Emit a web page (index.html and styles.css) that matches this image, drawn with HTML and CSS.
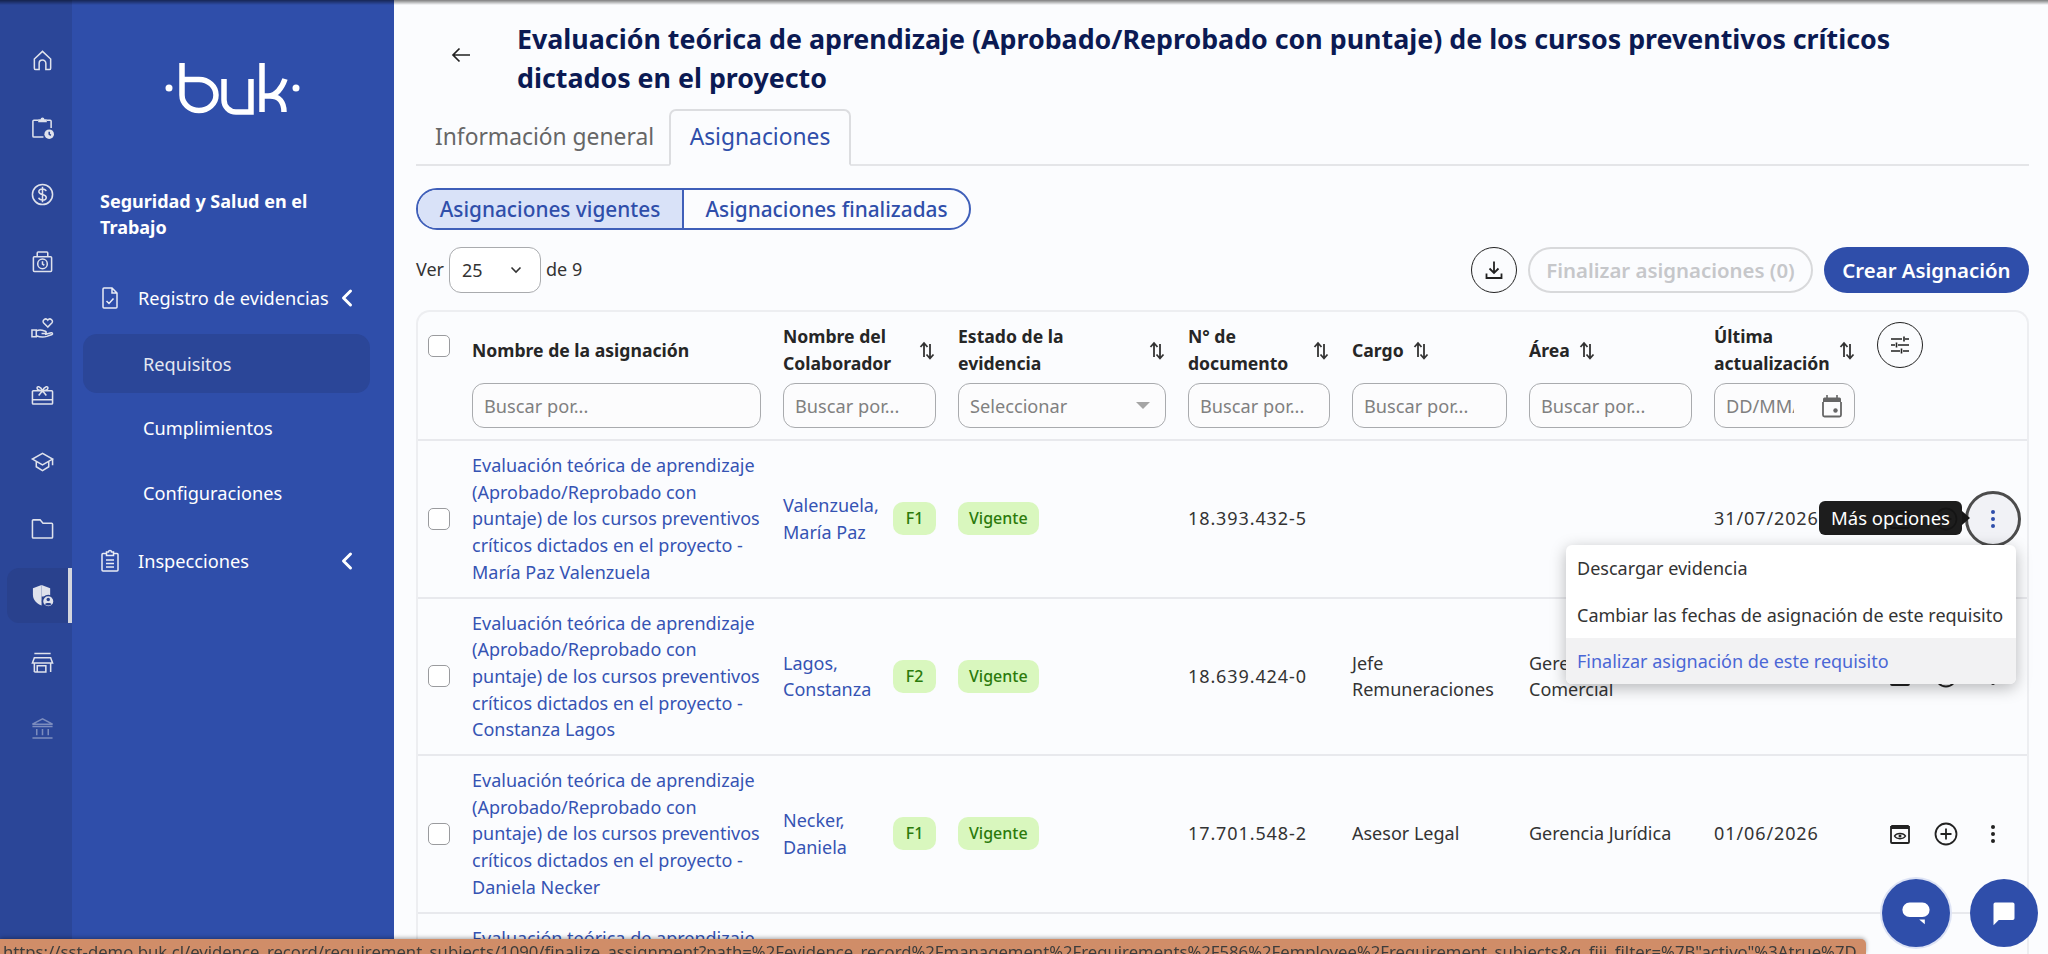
FILE: index.html
```html
<!DOCTYPE html>
<html lang="es">
<head>
    <meta charset="UTF-8">
    <title>Asignaciones - Seguridad y Salud en el Trabajo</title>
    <link rel="stylesheet" href="styles.css">
</head>
<body>
    <svg class="sprites" aria-hidden="true">
        <symbol id="i-sort" viewBox="0 0 18 22"><path d="M6 18V5M2.500 8 6 4l3.500 4M12 5v14M8.500 15.500 12 19.500l3.500-4" fill="none" stroke="currentColor" stroke-width="1.800"/></symbol>
        <symbol id="i-eye" viewBox="0 0 24 24"><path d="M3 7V4a1 1 0 0 1 1-1h16a1 1 0 0 1 1 1v3z" fill="currentColor"/><path d="M3 4v16a1 1 0 0 0 1 1h16a1 1 0 0 0 1-1V4" fill="none" stroke="currentColor" stroke-width="1.800"/><path d="M6.500 14c2-3.500 9-3.500 11 0-2 3.500-9 3.500-11 0z" fill="none" stroke="currentColor" stroke-width="1.500"/><circle cx="12" cy="14" r="1.500" fill="currentColor"/></symbol>
        <symbol id="i-plus" viewBox="0 0 24 24"><circle cx="12" cy="12" r="10.500" fill="none" stroke="currentColor" stroke-width="1.800"/><path d="M12 6.500v11M6.500 12h11" fill="none" stroke="currentColor" stroke-width="1.800"/></symbol>
        <symbol id="i-dots" viewBox="0 0 24 24"><circle cx="12" cy="5" r="2" fill="currentColor"/><circle cx="12" cy="12" r="2" fill="currentColor"/><circle cx="12" cy="19" r="2" fill="currentColor"/></symbol>
        <symbol id="i-chevron" viewBox="0 0 20 20"><path d="M13.500 3 6.500 10l7 7" fill="none" stroke="currentColor" stroke-width="3" stroke-linecap="round" stroke-linejoin="round"/></symbol>
    </svg>

    <div class="app">
        <!-- rail de modulos -->
        <nav class="rail">
            <a class="rail-item"><svg class="rail-icon" viewBox="0 0 24 24"><path d="M3.500 10.500 12 2.500l8.500 8V20a1.500 1.500 0 0 1-1.500 1.500h-3.500V15a3.500 3.500 0 0 0-7 0v6.500H5A1.500 1.500 0 0 1 3.500 20z"/></svg></a>
            <a class="rail-item"><svg class="rail-icon" viewBox="0 0 24 24"><path d="M16.500 4.500H20a1 1 0 0 1 1 1v7M7.500 4.500H3a1 1 0 0 0-1 1V21a1 1 0 0 0 1 1h10"/><path class="solid" d="M7.500 3.500H10a2 2 0 0 1 4 0h2.500v3h-9z"/><circle class="solid" cx="19" cy="19" r="5"/><path class="cut" d="M19 16.500V19l1.700 1.200"/></svg></a>
            <a class="rail-item"><svg class="rail-icon" viewBox="0 0 24 24"><circle cx="12" cy="12" r="10.500"/><path d="M15.800 8.500c-.5-1.600-2-2.300-3.800-2.300-2.100 0-3.800 1.100-3.800 2.900 0 3.800 7.700 2 7.700 5.900 0 1.800-1.800 2.800-3.900 2.800-1.900 0-3.400-.8-4-2.400M12 3.800v16.400"/></svg></a>
            <a class="rail-item"><svg class="rail-icon" viewBox="0 0 24 24"><rect x="2.500" y="7" width="19" height="15.500" rx="1"/><path d="M6.500 7V3a1 1 0 0 1 1-1h9a1 1 0 0 1 1 1v4"/><circle cx="12" cy="14.500" r="5"/><path d="M12 11.800v2.900l1.900 1.200"/></svg></a>
            <a class="rail-item"><svg class="rail-icon" viewBox="0 0 24 24"><path d="M17.500 10.500 13.300 6.300c-2.400-2.800 2-6 4.200-3 2.200-3 6.600.2 4.200 3z"/><path d="M1 13.500h4.500v7H1zM5.500 14.500c2-1 4.200-1.300 6.200-.7l3.300 1c1.300.5 1 2.400-.5 2.400h-3.500M5.500 19.500c4 1.700 8 1.700 11 .7l5.500-2c1-.6.200-2-1-1.700l-6.500 1.700"/></svg></a>
            <a class="rail-item"><svg class="rail-icon" viewBox="0 0 24 24"><path d="M1.500 9a1 1 0 0 1 1-1h19a1 1 0 0 1 1 1v12a1 1 0 0 1-1 1h-19a1 1 0 0 1-1-1zM1.500 17.500h21M12 8C10 3.500 5.500 2.500 6.500 6 7 7.800 10 8 12 8c2 0 5-.2 5.500-2C18.500 2.500 14 3.500 12 8zM12 8l-4 5M12 8l4 5"/></svg></a>
            <a class="rail-item"><svg class="rail-icon" viewBox="0 0 24 24"><path d="M12 3.500 1.500 9.500 12 15.500l10.500-6zM5.500 12v5.500l6.500 4 6.500-4V12M22.500 9.500V16"/></svg></a>
            <a class="rail-item"><svg class="rail-icon" viewBox="0 0 24 24"><path d="M1.500 4a1 1 0 0 1 1-1h7l3 3.500h9a1 1 0 0 1 1 1V21a1 1 0 0 1-1 1h-19a1 1 0 0 1-1-1z"/></svg></a>
            <a class="rail-item active"><svg class="rail-icon" viewBox="0 0 24 24"><path class="solid" d="M11 1 2 4.500v6.500c0 5.500 3.600 9.500 9 11.500z"/><path class="solid" d="M11 1l9 3.500V13h-9z"/><circle class="solid ring" cx="18" cy="18" r="6"/><circle class="cut-fill" cx="18" cy="16.200" r="1.800"/><path class="cut-fill" d="M14.500 21c.7-1.700 6.300-1.700 7 0a5 5 0 0 1-7 0z"/></svg></a>
            <a class="rail-item"><svg class="rail-icon" viewBox="0 0 24 24"><path d="M3.500 2.500h17M3.500 7h17l2 5.500h-21zM3.500 12.500V22M20.500 12.500V22M3.500 22h12M6.500 15.500h9V22h-9z"/></svg></a>
            <a class="rail-item dim"><svg class="rail-icon" viewBox="0 0 24 24"><path d="M12 2 1.500 7.500h21zM1.500 10h21M1.500 22h21M6 12.500V19M12 12.500V19M18 12.500V19"/></svg></a>
        </nav>

        <!-- menu del modulo -->
        <aside class="side">
            <svg class="logo" viewBox="0 0 136 52" role="img" aria-label="buk">
                <circle cx="4" cy="26" r="3.500" class="logo-dot"/>
                <path d="M17 1v32a17 15.500 0 1 0 17-15.500H17M59 17v21a12 12 0 0 0 12 12h15V17M97 1v49M97 34h6c8 0 14-8 17-17M105 34c9 0 14 6 14 16" class="logo-line"/>
                <circle cx="131" cy="26" r="3.500" class="logo-dot"/>
            </svg>
            <h2 class="side-title">Seguridad y Salud en el Trabajo</h2>
            <ul class="side-menu">
                <li class="side-group">
                    <svg class="side-icon" viewBox="0 0 24 24"><path d="M6 2h8l5 5v14a1 1 0 0 1-1 1H6a1 1 0 0 1-1-1V3a1 1 0 0 1 1-1zM14 2v5h5M8.500 15l2.500 2.500 4.500-5"/></svg>
                    <span>Registro de evidencias</span>
                    <svg class="side-chevron"><use href="#i-chevron"/></svg>
                </li>
                <li class="side-sub current">Requisitos</li>
                <li class="side-sub">Cumplimientos</li>
                <li class="side-sub">Configuraciones</li>
                <li class="side-group last">
                    <svg class="side-icon" viewBox="0 0 24 24"><path d="M8 4.500H5a1 1 0 0 0-1 1V21a1 1 0 0 0 1 1h14a1 1 0 0 0 1-1V5.500a1 1 0 0 0-1-1h-3M8.500 3H10.500a1.500 1.500 0 0 1 3 0h2v3.500h-7zM8 11h8M8 14.500h8M8 18h8"/></svg>
                    <span>Inspecciones</span>
                    <svg class="side-chevron"><use href="#i-chevron"/></svg>
                </li>
            </ul>
        </aside>

        <main class="main">
            <header class="page-head">
                <svg class="back" viewBox="0 0 24 24"><path d="M21 12H4M10.500 5.500 4 12l6.500 6.500" fill="none" stroke="currentColor" stroke-width="1.700"/></svg>
                <h1>Evaluación teórica de aprendizaje (Aprobado/Reprobado con puntaje) de los cursos preventivos críticos dictados en el proyecto</h1>
            </header>

            <div class="tabs">
                <a class="tab">Información general</a>
                <a class="tab active">Asignaciones</a>
            </div>

            <div class="segment">
                <a class="segment-item active">Asignaciones vigentes</a>
                <a class="segment-item">Asignaciones finalizadas</a>
            </div>

            <div class="toolbar">
                <div class="pager">
                    <span>Ver</span>
                    <div class="page-size">
                        <b>25</b>
                        <svg viewBox="0 0 12 8"><path d="M1.500 1.500 6 6l4.500-4.500" fill="none" stroke="currentColor" stroke-width="1.600"/></svg>
                    </div>
                    <span>de 9</span>
                </div>
                <div class="actions">
                    <button class="btn-round"><svg viewBox="0 0 24 24"><path d="M12 3.500v11.500M7.500 10.500 12 15l4.500-4.500M4.500 15.500V20h15v-4.500" fill="none" stroke="currentColor" stroke-width="1.800"/></svg></button>
                    <button class="btn btn-disabled">Finalizar asignaciones (0)</button>
                    <button class="btn btn-primary">Crear Asignación</button>
                </div>
            </div>

            <div class="table-wrap">
                <table class="data-table">
                    <colgroup>
                        <col class="c-check"><col class="c-name"><col class="c-person"><col class="c-state">
                        <col class="c-doc"><col class="c-job"><col class="c-area"><col class="c-date"><col class="c-acts">
                    </colgroup>
                    <thead>
                        <tr>
                            <th class="cell-check"><span class="checkbox"></span></th>
                            <th>
                                <div class="th-label">Nombre de la asignación</div>
                                <input class="filter" placeholder="Buscar por...">
                            </th>
                            <th>
                                <div class="th-label spread"><span>Nombre del<br>Colaborador</span><svg class="sort"><use href="#i-sort"/></svg></div>
                                <input class="filter" placeholder="Buscar por...">
                            </th>
                            <th>
                                <div class="th-label spread"><span>Estado de la<br>evidencia</span><svg class="sort"><use href="#i-sort"/></svg></div>
                                <div class="filter filter-select"><span>Seleccionar</span><i class="caret"></i></div>
                            </th>
                            <th>
                                <div class="th-label spread"><span>N° de<br>documento</span><svg class="sort"><use href="#i-sort"/></svg></div>
                                <input class="filter" placeholder="Buscar por...">
                            </th>
                            <th>
                                <div class="th-label">Cargo<svg class="sort"><use href="#i-sort"/></svg></div>
                                <input class="filter" placeholder="Buscar por...">
                            </th>
                            <th>
                                <div class="th-label">Área<svg class="sort"><use href="#i-sort"/></svg></div>
                                <input class="filter" placeholder="Buscar por...">
                            </th>
                            <th>
                                <div class="th-label spread"><span>Última<br>actualización</span><svg class="sort"><use href="#i-sort"/></svg></div>
                                <div class="filter filter-date">
                                    <input placeholder="DD/MM/AAAA">
                                    <svg viewBox="0 0 24 24"><path d="M7 1v3M17 1v3" stroke="currentColor" stroke-width="1.600"/><path d="M3 8V5a1.500 1.500 0 0 1 1.500-1.500h15A1.500 1.500 0 0 1 21 5v3z" fill="currentColor"/><path d="M3 8v13a1.500 1.500 0 0 0 1.500 1.500h15A1.500 1.500 0 0 0 21 21V8" fill="none" stroke="currentColor" stroke-width="1.800"/><circle cx="15.500" cy="16.500" r="2.200" fill="currentColor"/></svg>
                                </div>
                            </th>
                            <th class="cell-settings">
                                <button class="btn-round"><svg viewBox="0 0 24 24"><path d="M3 6h11M17 6h4M16 3.500v5M3 12h4M10 12h11M8.500 9.500v5M3 18h9M15 18h6M13.500 15.500v5" fill="none" stroke="currentColor" stroke-width="1.600"/></svg></button>
                            </th>
                        </tr>
                    </thead>
                    <tbody>
                        <tr>
                            <td class="cell-check"><span class="checkbox"></span></td>
                            <td><a class="link">Evaluación teórica de aprendizaje (Aprobado/Reprobado con puntaje) de los cursos preventivos críticos dictados en el proyecto - María Paz Valenzuela</a></td>
                            <td><div class="person"><a class="link">Valenzuela, María Paz</a><span class="badge">F1</span></div></td>
                            <td><span class="badge">Vigente</span></td>
                            <td class="num">18.393.432-5</td>
                            <td></td>
                            <td></td>
                            <td class="num">31/07/2026</td>
                            <td>
                                <div class="row-actions">
                                    <a class="row-btn"><svg><use href="#i-eye"/></svg></a>
                                    <a class="row-btn"><svg><use href="#i-plus"/></svg></a>
                                    <a class="row-btn more open">
                                        <svg><use href="#i-dots"/></svg>
                                        <span class="tooltip">Más opciones</span>
                                    </a>
                                    <ul class="menu">
                                        <li>Descargar evidencia</li>
                                        <li>Cambiar las fechas de asignación de este requisito</li>
                                        <li class="hover">Finalizar asignación de este requisito</li>
                                    </ul>
                                </div>
                            </td>
                        </tr>
                        <tr>
                            <td class="cell-check"><span class="checkbox"></span></td>
                            <td><a class="link">Evaluación teórica de aprendizaje (Aprobado/Reprobado con puntaje) de los cursos preventivos críticos dictados en el proyecto - Constanza Lagos</a></td>
                            <td><div class="person"><a class="link">Lagos, Constanza</a><span class="badge">F2</span></div></td>
                            <td><span class="badge">Vigente</span></td>
                            <td class="num">18.639.424-0</td>
                            <td>Jefe Remuneraciones</td>
                            <td>Gerencia<br>Comercial</td>
                            <td></td>
                            <td>
                                <div class="row-actions">
                                    <a class="row-btn"><svg><use href="#i-eye"/></svg></a>
                                    <a class="row-btn"><svg><use href="#i-plus"/></svg></a>
                                    <a class="row-btn"><svg><use href="#i-dots"/></svg></a>
                                </div>
                            </td>
                        </tr>
                        <tr>
                            <td class="cell-check"><span class="checkbox"></span></td>
                            <td><a class="link">Evaluación teórica de aprendizaje (Aprobado/Reprobado con puntaje) de los cursos preventivos críticos dictados en el proyecto - Daniela Necker</a></td>
                            <td><div class="person"><a class="link">Necker, Daniela</a><span class="badge">F1</span></div></td>
                            <td><span class="badge">Vigente</span></td>
                            <td class="num">17.701.548-2</td>
                            <td>Asesor Legal</td>
                            <td>Gerencia Jurídica</td>
                            <td class="num">01/06/2026</td>
                            <td>
                                <div class="row-actions">
                                    <a class="row-btn"><svg><use href="#i-eye"/></svg></a>
                                    <a class="row-btn"><svg><use href="#i-plus"/></svg></a>
                                    <a class="row-btn"><svg><use href="#i-dots"/></svg></a>
                                </div>
                            </td>
                        </tr>
                        <tr class="row-cut">
                            <td class="cell-check"></td>
                            <td><a class="link">Evaluación teórica de aprendizaje (Aprobado/Reprobado con puntaje) de los cursos preventivos críticos dictados en el proyecto</a></td>
                            <td></td><td></td><td></td><td></td><td></td><td></td><td></td>
                        </tr>
                    </tbody>
                </table>
            </div>
        </main>
    </div>

    <div class="top-shade"></div>

    <div class="chat-buttons">
        <button class="chat-btn glow"><svg viewBox="0 0 40 32"><rect x="3" y="3" width="34" height="18" rx="9" fill="#fff"/><path d="M24 24h7v6z" fill="#fff"/></svg></button>
        <button class="chat-btn"><svg viewBox="0 0 32 32"><path d="M6 4h20a2 2 0 0 1 2 2v16a2 2 0 0 1-2 2H10l-6 6V6a2 2 0 0 1 2-2z" fill="#fff"/></svg></button>
    </div>

    <div class="status-url">https://sst-demo.buk.cl/evidence_record/requirement_subjects/1090/finalize_assignment?path=%2Fevidence_record%2Fmanagement%2Frequirements%2F586%2Femployee%2Frequirement_subjects&amp;q_fiji_filter=%7B"activo"%3Atrue%7D</div>
</body>
</html>
```

FILE: styles.css
```css
*, *::before, *::after {
    box-sizing: border-box;
}

html, body {
    margin: 0;
    height: 100%;
    overflow: hidden;
}

body {
    font-family: "Noto Sans", "Open Sans", sans-serif;
    font-size: 18px;
    color: #333;
    background-color: #fff;
}

a {
    color: inherit;
    text-decoration: none;
}

ul {
    list-style: none;
    margin: 0;
    padding: 0;
}

button {
    font-family: inherit;
    cursor: pointer;
}

.sprites {
    display: none;
}

.app {
    display: flex;
    height: 100vh;
}

/* rail */
.rail {
    flex: 0 0 72px;
    padding-top: 27.6px;
    background-color: #2b4698;
}

.rail-item {
    display: flex;
    align-items: center;
    justify-content: center;
    width: 60px;
    height: 66.8px;
    margin-left: 12px;
}

.rail-item.active {
    width: 65px;
    height: 55px;
    margin: 5.9px 0 5.9px 7px;
    padding-left: 9px;
    background-color: #29418d;
    border-right: 4px solid #d4d6de;
    border-radius: 12px 0 0 12px;
}

.rail-item.dim {
    opacity: 0.45;
}

.rail-icon {
    width: 23px;
    height: 23px;
    fill: none;
    stroke: #dfe2ec;
    stroke-width: 1.600;
    overflow: visible;
}

.rail-icon .solid {
    fill: #dfe2ec;
    stroke: none;
}

.rail-icon .ring {
    stroke: #29418d;
    stroke-width: 1.500;
}

.rail-icon .cut {
    stroke: #2b4698;
}

.rail-icon .cut-fill {
    fill: #29418d;
    stroke: none;
}

/* menu lateral */
.side {
    flex: 0 0 322px;
    padding-top: 62px;
    background-color: #2f4eaa;
    color: #fff;
}

.logo {
    display: block;
    width: 136px;
    height: 52px;
    margin: 0 auto;
    overflow: visible;
}

.logo-dot {
    fill: #fff;
}

.logo-line {
    fill: none;
    stroke: #fff;
    stroke-width: 5.500;
}

.side-title {
    margin: 73.5px 32px 24.500px 28px;
    font-size: 18px;
    font-weight: 700;
    line-height: 26.600px;
}

.side-group {
    display: flex;
    align-items: center;
    height: 65px;
    padding: 0 37px 0 26px;
    font-size: 18.200px;
}

.side-group.last {
    margin-top: 6.500px;
}

.side-icon {
    flex: 0 0 24px;
    height: 24px;
    margin-right: 16px;
    fill: none;
    stroke: #e9ecf5;
    stroke-width: 1.500;
}

.side-chevron {
    flex: 0 0 20px;
    height: 20px;
    margin-left: auto;
}

.side-sub {
    display: flex;
    align-items: center;
    width: 287px;
    height: 59px;
    margin: 0 0 5.500px 11px;
    padding-left: 60px;
    font-size: 18.200px;
    border-radius: 14px;
}

.side-sub.current {
    margin-top: 4px;
    background-color: #2b4698;
    color: #e4e7f1;
}

/* contenido */
.main {
    flex: 1;
    min-width: 0;
    padding: 20px 19px 0 22px;
    overflow: hidden;
    background-color: #fbfcfe;
}

.page-head {
    display: flex;
    align-items: flex-start;
    padding-right: 60px;
}

.page-head h1 {
    margin: 0;
    font-size: 26.800px;
    font-weight: 700;
    line-height: 38.500px;
    color: #0b1a53;
}

.back {
    flex: 0 0 24px;
    height: 24px;
    margin: 23px 44px 0 33px;
    color: #222;
}

.tabs {
    display: flex;
    height: 57px;
    margin-top: 12px;
    border-bottom: 2px solid #e4e5e8;
}

.tab {
    display: flex;
    align-items: center;
    flex: 0 0 253px;
    height: 57px;
    padding: 0 0 2px 17px;
    font-size: 22.800px;
    color: #666;
    white-space: nowrap;
    border: 2px solid transparent;
}

.tab.active {
    flex: 0 0 182px;
    justify-content: center;
    padding-left: 0;
    color: #2f4eaa;
    border-color: #dcdde0;
    border-bottom-color: #fbfcfe;
    border-radius: 7px 7px 0 0;
}

.segment {
    display: flex;
    width: 555px;
    height: 42px;
    margin-top: 22px;
    border: 2px solid #3f5fb9;
    border-radius: 21px;
    overflow: hidden;
}

.segment-item {
    display: flex;
    align-items: center;
    justify-content: center;
    font-size: 20.800px;
    font-weight: 500;
    color: #2f4eaa;
}

.segment-item.active {
    flex: 0 0 266px;
    background-color: #d9e2f8;
    border-right: 2px solid #3f5fb9;
}

.segment-item:last-child {
    flex: 1;
}

.toolbar {
    display: flex;
    align-items: center;
    justify-content: space-between;
    height: 46px;
    margin-top: 17px;
}

.pager {
    display: flex;
    align-items: center;
    gap: 5px;
}

.pager > span {
    margin-bottom: 3px;
}

.page-size {
    display: flex;
    align-items: center;
    justify-content: space-between;
    width: 92px;
    height: 46px;
    padding: 0 18px 0 12px;
    background-color: #fff;
    border: 1.500px solid #a9abae;
    border-radius: 12px;
}

.page-size b {
    font-weight: 400;
}

.page-size svg {
    width: 12px;
    height: 8px;
}

.actions {
    display: flex;
    align-items: center;
}

.btn-round {
    display: flex;
    align-items: center;
    justify-content: center;
    width: 46px;
    height: 46px;
    padding: 0;
    color: #222;
    background: transparent;
    border: 1.500px solid #222;
    border-radius: 50%;
}

.btn-round svg {
    width: 24px;
    height: 24px;
}

.btn {
    height: 46px;
    font-size: 20.400px;
    font-weight: 600;
    white-space: nowrap;
    border-radius: 23px;
}

.btn-disabled {
    width: 285px;
    margin: 0 11px;
    padding: 0;
    color: #c6c7ca;
    background: transparent;
    border: 2px solid #d8d9db;
}

.btn-primary {
    width: 205px;
    padding: 0;
    color: #fff;
    background-color: #2f4eaa;
    border: 0;
}

/* tabla */
.table-wrap {
    margin-top: 17px;
    border: 2px solid #edeef1;
    border-bottom: 0;
    border-radius: 14px 14px 0 0;
}

.data-table {
    width: 100%;
    table-layout: fixed;
    border-collapse: collapse;
}

.c-check { width: 43px; }
.c-name { width: 311px; }
.c-person { width: 175px; }
.c-state { width: 230px; }
.c-doc { width: 164px; }
.c-job { width: 177px; }
.c-area { width: 185px; }
.c-date { width: 163px; }

.data-table th {
    height: 128px;
    padding: 11px 11px 10px;
    font-weight: 400;
    text-align: left;
    vertical-align: top;
    border-bottom: 2px solid #e8e9ed;
}

.data-table td {
    height: 156px;
    padding: 11px;
    line-height: 26.700px;
    border-bottom: 2px solid #e8e9ed;
}

.data-table td.num {
    letter-spacing: 0.9px;
}

.data-table .row-cut td {
    vertical-align: top;
}

.data-table th.cell-check,
.data-table td.cell-check {
    padding: 0 0 0 10px;
}

.data-table th.cell-check {
    padding-top: 23px;
}

.data-table th.cell-settings {
    padding-top: 10px;
}

.checkbox {
    display: block;
    width: 22px;
    height: 22px;
    background-color: #fff;
    border: 1.500px solid #9a9b9e;
    border-radius: 5px;
}

.th-label {
    display: flex;
    align-items: center;
    gap: 8px;
    height: 54px;
    margin-bottom: 6px;
    font-size: 17.600px;
    font-weight: 700;
    line-height: 26.700px;
    color: #262626;
    white-space: nowrap;
}

.th-label.spread {
    justify-content: space-between;
}

.sort {
    flex: 0 0 18px;
    width: 18px;
    height: 22px;
    color: #333;
}

.filter {
    display: block;
    width: 100%;
    height: 45px;
    padding: 0 11px;
    font-family: inherit;
    font-size: 18.200px;
    color: #808080;
    background-color: #fcfcfd;
    border: 1.500px solid #a9abae;
    border-radius: 12px;
}

.filter::placeholder {
    color: #808080;
}

.filter-select {
    display: flex;
    align-items: center;
    justify-content: space-between;
    padding-right: 15px;
}

.caret {
    width: 0;
    height: 0;
    border-left: 7px solid transparent;
    border-right: 7px solid transparent;
    border-top: 7px solid #a5a5a5;
}

.filter-date {
    display: flex;
    align-items: center;
    padding-right: 10px;
}

.filter-date input {
    width: 68px;
    padding: 0;
    font-family: inherit;
    font-size: 18.200px;
    background: transparent;
    border: 0;
    outline: 0;
}

.filter-date input::placeholder {
    color: #808080;
}

.filter-date svg {
    flex: 0 0 24px;
    height: 24px;
    margin-left: auto;
    color: #666;
}

.link {
    color: #3553b3;
}

.person {
    display: flex;
    align-items: center;
    justify-content: space-between;
    gap: 8px;
}

.badge {
    display: inline-flex;
    align-items: center;
    justify-content: center;
    flex: none;
    min-width: 43px;
    height: 33px;
    padding: 0 11px;
    font-size: 16px;
    font-weight: 500;
    color: #2b7a0b;
    background-color: #d9f7be;
    border-radius: 10px;
}

.row-actions {
    position: relative;
    display: flex;
}

.row-btn {
    position: relative;
    display: flex;
    align-items: center;
    justify-content: center;
    width: 47px;
    height: 47px;
    color: #222;
}

.row-btn svg {
    width: 24px;
    height: 24px;
}

.row-btn.more.open {
    color: #2f4eaa;
}

.row-btn.more.open::before {
    content: "";
    position: absolute;
    top: -4.500px;
    left: -4.500px;
    width: 56px;
    height: 56px;
    background-color: #f1f2f6;
    border: 3px solid #4c4c4c;
    border-radius: 50%;
}

.row-btn.more.open svg {
    position: relative;
}

.tooltip {
    position: absolute;
    top: 6px;
    right: 54px;
    width: 143px;
    height: 34px;
    font-size: 18.500px;
    line-height: 33px;
    text-align: center;
    color: #fff;
    white-space: nowrap;
    background-color: rgba(20, 20, 20, 0.96);
    border-radius: 6px;
}

.tooltip::after {
    content: "";
    position: absolute;
    top: 10px;
    right: -8px;
    border-top: 7px solid transparent;
    border-bottom: 7px solid transparent;
    border-left: 8px solid #171717;
}

.menu {
    position: absolute;
    top: 50px;
    right: 0;
    z-index: 5;
    width: 450px;
    background-color: #fff;
    border-radius: 6px;
    box-shadow: 0 4px 16px rgba(0, 0, 0, 0.28);
    overflow: hidden;
}

.menu li {
    height: 46.300px;
    padding: 0 11px;
    font-size: 18px;
    line-height: 46.300px;
    color: #333;
    white-space: nowrap;
}

.menu li.hover {
    color: #4a67d6;
    background-color: #f2f2f3;
}

/* capas fijas */
.top-shade {
    position: fixed;
    top: 0;
    left: 0;
    right: 0;
    height: 5px;
    background: linear-gradient(rgba(0, 0, 0, 0.5), rgba(0, 0, 0, 0));
}

.chat-buttons {
    position: fixed;
    top: 879px;
    left: 1882px;
    display: flex;
    gap: 19.500px;
}

.chat-btn {
    display: flex;
    align-items: center;
    justify-content: center;
    width: 68px;
    height: 68px;
    padding: 0;
    background-color: #2f4eaa;
    border: 0;
    border-radius: 50%;
}

.chat-btn.glow {
    box-shadow: 0 0 0 2px #dde3f5;
}

.chat-btn svg {
    width: 32px;
    height: 28px;
}

.status-url {
    position: fixed;
    left: 0;
    bottom: 0;
    width: 1866px;
    height: 15px;
    padding: 3px 0 0 3px;
    overflow: hidden;
    font-size: 16.700px;
    line-height: 20px;
    color: #3c3c3c;
    white-space: nowrap;
    background-color: #d08d68;
    border-radius: 0 5px 0 0;
    box-shadow: 0 -1px 4px rgba(0, 0, 0, 0.35);
}
```
